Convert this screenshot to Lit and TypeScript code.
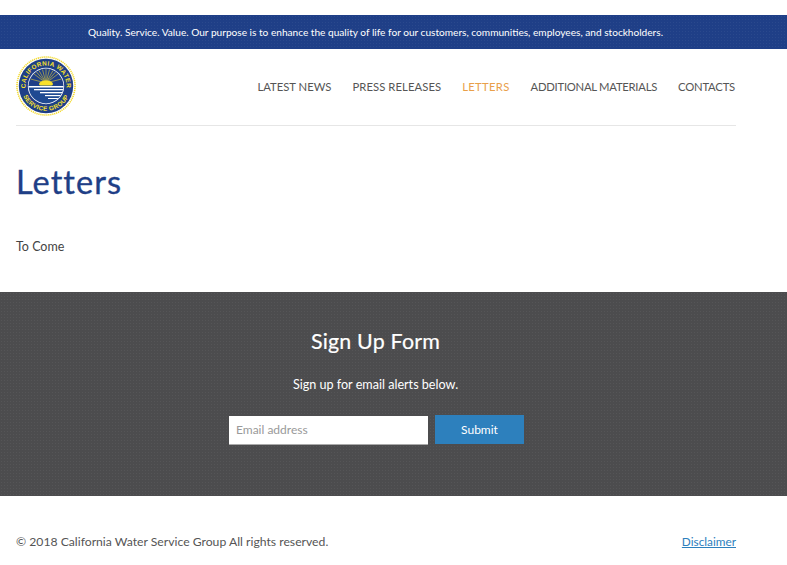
import { LitElement, html, css } from "lit";
import { customElement } from "lit/decorators.js";

@customElement("app-root")
export class AppRoot extends LitElement {
  static styles = css`
    :host { display: block; width: 787px; height: 565px; overflow: hidden; background: #fff; font-family: Lato, "Open Sans", sans-serif; color: #444; }
    * { box-sizing: border-box; }
    .top-gap { height: 15px; }
    .banner { height: 34px; background-color: #1f3f87; background-image: radial-gradient(rgba(255,255,255,.05) .6px, transparent .8px); background-size: 3px 3px; color: #fff; font-size: 10.12px; display: flex; align-items: center; padding: 0 0 1px 88px; white-space: nowrap; }
    .wrap { width: 720px; margin-left: 16px; }
    .head { height: 77px; display: flex; justify-content: space-between; align-items: center; border-bottom: 1px solid #e6e6e6; padding-bottom: 1px; }
    .logo { width: 60px; height: 60px; display: block; margin-top: -1px; }
    nav { display: flex; gap: 21px; font-size: 11.28px; color: #555; white-space: nowrap; padding-right: 1px; }
    nav a { color: inherit; text-decoration: none; }
    nav a.on { color: #e9a04a; letter-spacing: .3px; }
    nav a.tight { letter-spacing: -.25px; }
    nav a.snug { letter-spacing: -.2px; }
    nav a.loose { letter-spacing: .08px; }
    .main { height: 166px; padding-top: 36px; }
    h1 { margin: 0; font-weight: 400; font-size: 32.5px; line-height: 40px; color: #1f3f87; letter-spacing: 1.05px; -webkit-text-stroke: .35px #1f3f87; }
    .main p { margin: 37px 0 0; font-size: 12.5px; line-height: 16px; color: #444; }
    .signup { height: 204px; background-color: #4c4c4e; background-image: radial-gradient(rgba(255,255,255,.05) .6px, transparent .8px); background-size: 3px 3px; color: #fff; display: flex; flex-direction: column; align-items: center; padding: 35px 36px 0 0; }
    h2 { margin: 0; font-weight: 400; font-size: 21.4px; line-height: 28px; letter-spacing: .2px; -webkit-text-stroke: .2px #fff; }
    .signup p { margin: 22px 0 0; font-size: 12.6px; line-height: 16px; }
    form { display: flex; gap: 7px; margin: 22px 0 0 2px; align-items: flex-end; }
    input { width: 199px; height: 29px; border: 0; border-bottom: 1px solid #aaa; background: #fff; padding: 0 7px 1px; font: 12px Lato, sans-serif; outline: 0; }
    input::placeholder { color: #999; opacity: 1; }
    button { width: 89px; height: 29px; margin-bottom: 1px; border: 0; background-color: #2d80bd; color: #fff; font: 12px Lato, sans-serif; padding: 0 0 1px; }
    .foot { height: 69px; width: 720px; margin-left: 16px; display: flex; justify-content: space-between; align-items: center; font-size: 12.2px; color: #555; padding-top: 22px; }
    .foot a { color: #2d80bd; text-decoration: underline; font-size: 11.8px; }
    .seal-t { font: 700 6.3px "Liberation Sans", sans-serif; fill: #f7e02c; letter-spacing: .35px; }
  `;

  render() {
    return html`
      <div class="top-gap"></div>
      <div class="banner">Quality. Service. Value. Our purpose is to enhance the quality of life for our customers, communities, employees, and stockholders.</div>
      <div class="wrap">
        <header class="head">
          <svg class="logo" viewBox="0 0 60 60" aria-label="California Water Service Group">
            <defs>
              <path id="arcT" d="M14.3 43.2 A20.5 20.5 0 1 1 45.7 43.2"></path>
              <path id="arcB" d="M5.4 34.3 A25 25 0 0 0 54.6 34.3"></path>
              <clipPath id="inner"><circle cx="30" cy="30" r="17.4"></circle></clipPath>
            </defs>
            <circle cx="30" cy="30" r="29" fill="#fff" stroke="#f2d92c" stroke-width="1.6" stroke-dasharray="1.2 .8"></circle>
            <circle cx="30" cy="30" r="27.2" fill="#1f3f87"></circle>
            <circle cx="30" cy="30" r="18.2" fill="#fff"></circle>
            <g clip-path="url(#inner)">
              <rect x="10" y="10" width="40" height="20" fill="#1f3f87"></rect>
              <g stroke="#f2d92c" stroke-width=".55">
                <path d="M30 27V13M30 27L23 14.5M30 27L37 14.5M30 27L18 18M30 27L42 18M30 27L14.5 23M30 27L45.5 23M30 27L26.5 13.5M30 27L33.5 13.5M30 27L20.5 16M30 27L39.5 16"></path>
              </g>
              <ellipse cx="30" cy="28" rx="7" ry="3.5" fill="#f8e02c"></ellipse>
              <rect x="10" y="29.5" width="40" height="20" fill="#1f4a92"></rect>
              <g fill="#fff">
                <rect x="12" y="30" width="36" height="1.5"></rect>
                <rect x="18" y="33" width="30" height="1.3"></rect>
                <rect x="24" y="36" width="24" height="1.3"></rect>
                <rect x="29" y="39" width="16" height="1.2"></rect>
                <rect x="32" y="42" width="10" height="1"></rect>
              </g>
            </g>
            <text class="seal-t"><textPath href="#arcT" startOffset="50%" text-anchor="middle">CALIFORNIA WATER</textPath></text>
            <text class="seal-t"><textPath href="#arcB" startOffset="50%" text-anchor="middle">SERVICE GROUP</textPath></text>
          </svg>
          <nav>
            <a>LATEST NEWS</a><a class="loose">PRESS RELEASES</a><a class="on">LETTERS</a><a class="tight">ADDITIONAL MATERIALS</a><a class="snug">CONTACTS</a>
          </nav>
        </header>
        <main class="main">
          <h1>Letters</h1>
          <p>To Come</p>
        </main>
      </div>
      <section class="signup">
        <h2>Sign Up Form</h2>
        <p>Sign up for email alerts below.</p>
        <form>
          <input placeholder="Email address" />
          <button type="button">Submit</button>
        </form>
      </section>
      <footer class="foot">
        <span>© 2018 California Water Service Group All rights reserved.</span>
        <a>Disclaimer</a>
      </footer>
    `;
  }
}
